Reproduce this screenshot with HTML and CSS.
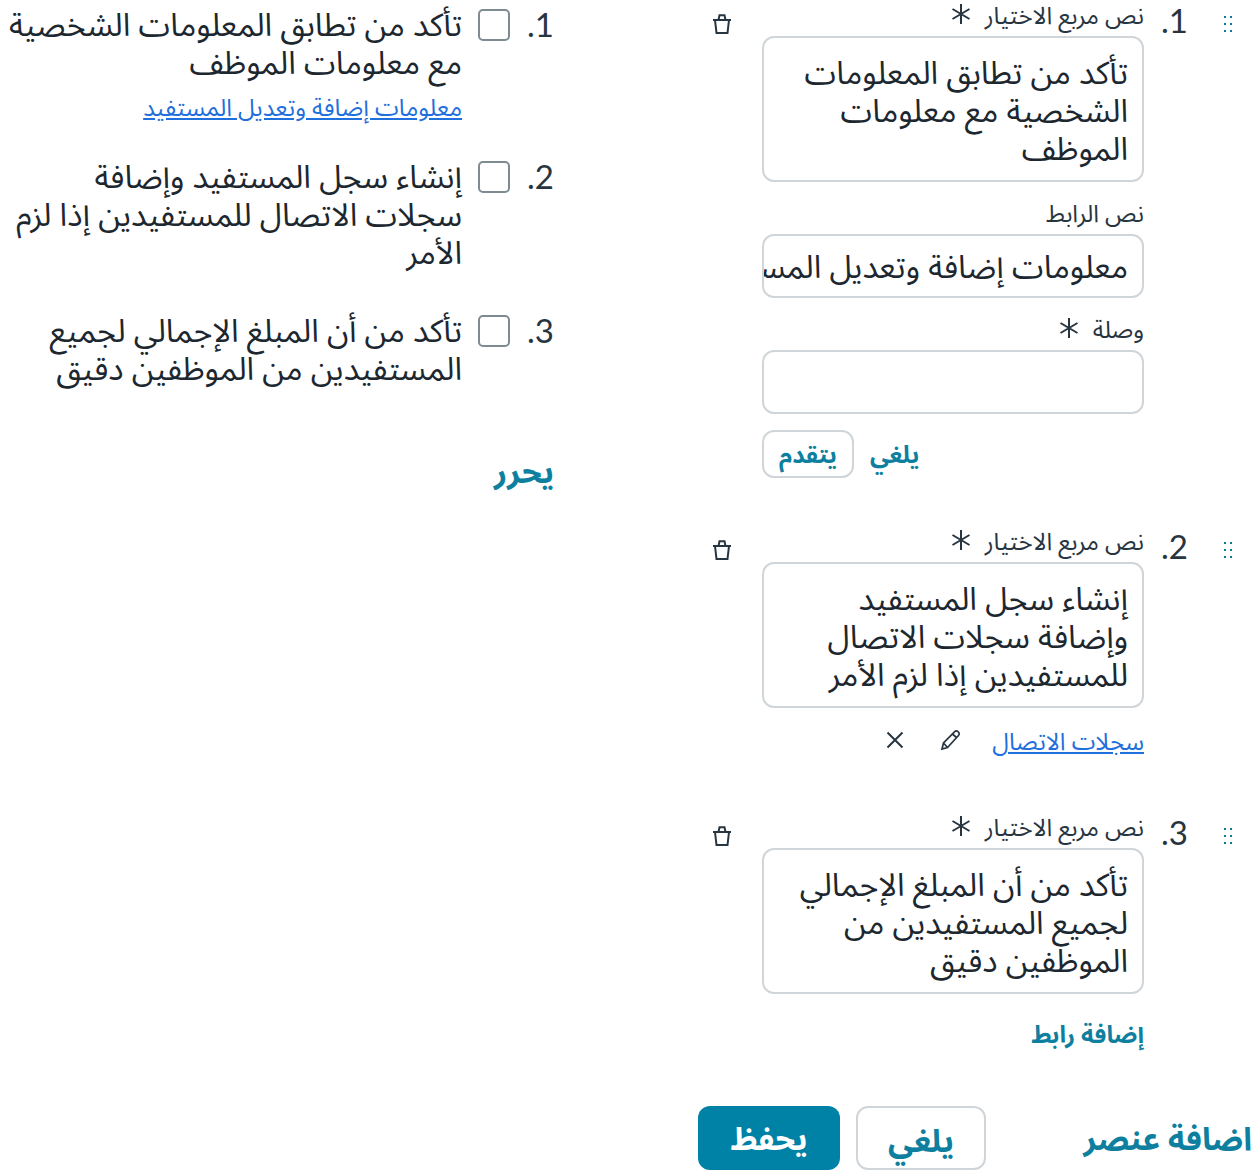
FILE: index.html
```html
<!DOCTYPE html>
<html lang="ar" dir="rtl">
<head>
    <meta charset="UTF-8">
    <meta name="viewport" content="width=device-width, initial-scale=1.0">
    <title>قائمة التحقق</title>
    <link rel="stylesheet" href="styles.css">
</head>
<body>
    <div class="page">
        <!-- Editor column -->
        <div class="editor">
            <div class="edit-item">
                <svg class="handle" viewBox="0 0 10 18"><g fill="#0b7a99"><rect x="1" y="1" width="2" height="2"/><rect x="7" y="1" width="2" height="2"/><rect x="1" y="8" width="2" height="2"/><rect x="7" y="8" width="2" height="2"/><rect x="1" y="15" width="2" height="2"/><rect x="7" y="15" width="2" height="2"/></g></svg>
                <div class="number">1.</div>
                <div class="fields">
                    <label class="field-label">نص مربع الاختيار <svg class="star" viewBox="0 0 20 20"><path d="M10 0v20M1.500 5l17 10M18.500 5l-17 10"/></svg></label>
                    <textarea class="text-box" rows="3">تأكد من تطابق المعلومات الشخصية مع معلومات الموظف</textarea>
                    <label class="field-label link-label">نص الرابط</label>
                    <input class="line-box" value="معلومات إضافة وتعديل المستفيد">
                    <label class="field-label url-label">وصلة <svg class="star" viewBox="0 0 20 20"><path d="M10 0v20M1.500 5l17 10M18.500 5l-17 10"/></svg></label>
                    <input class="line-box">
                    <div class="link-actions">
                        <span class="small-cancel">يلغي</span>
                        <button class="small-button">يتقدم</button>
                    </div>
                </div>
                <svg class="trash" viewBox="0 0 20 20"><path d="M1 6h18M3 6l1.500 13h11L17 6M6.500 6l1-4.800h5l1 4.800"/></svg>
            </div>

            <div class="edit-item second">
                <svg class="handle" viewBox="0 0 10 18"><g fill="#0b7a99"><rect x="1" y="1" width="2" height="2"/><rect x="7" y="1" width="2" height="2"/><rect x="1" y="8" width="2" height="2"/><rect x="7" y="8" width="2" height="2"/><rect x="1" y="15" width="2" height="2"/><rect x="7" y="15" width="2" height="2"/></g></svg>
                <div class="number">2.</div>
                <div class="fields">
                    <label class="field-label">نص مربع الاختيار <svg class="star" viewBox="0 0 20 20"><path d="M10 0v20M1.500 5l17 10M18.500 5l-17 10"/></svg></label>
                    <textarea class="text-box" rows="3">إنشاء سجل المستفيد وإضافة سجلات الاتصال للمستفيدين إذا لزم الأمر</textarea>
                    <div class="link-row">
                        <a class="item-link" href="#">سجلات الاتصال</a>
                        <svg class="pencil" viewBox="0 0 22 22"><path d="M2 20l1.500-6L14.500 2.800c1-1 2.500-1 3.700 0s1.300 2.700.3 3.700L7.500 18.500zM3.500 14l4 4.500M12.500 5l4.500 4"/></svg>
                        <svg class="close" viewBox="0 0 18 18"><path d="M1.500 1.500l15 15M16.500 1.500l-15 15"/></svg>
                    </div>
                </div>
                <svg class="trash" viewBox="0 0 20 20"><path d="M1 6h18M3 6l1.500 13h11L17 6M6.500 6l1-4.800h5l1 4.800"/></svg>
            </div>

            <div class="edit-item third">
                <svg class="handle" viewBox="0 0 10 18"><g fill="#0b7a99"><rect x="1" y="1" width="2" height="2"/><rect x="7" y="1" width="2" height="2"/><rect x="1" y="8" width="2" height="2"/><rect x="7" y="8" width="2" height="2"/><rect x="1" y="15" width="2" height="2"/><rect x="7" y="15" width="2" height="2"/></g></svg>
                <div class="number">3.</div>
                <div class="fields">
                    <label class="field-label">نص مربع الاختيار <svg class="star" viewBox="0 0 20 20"><path d="M10 0v20M1.500 5l17 10M18.500 5l-17 10"/></svg></label>
                    <textarea class="text-box" rows="3">تأكد من أن المبلغ الإجمالي لجميع المستفيدين من الموظفين دقيق</textarea>
                    <div class="add-link">إضافة رابط</div>
                </div>
                <svg class="trash" viewBox="0 0 20 20"><path d="M1 6h18M3 6l1.500 13h11L17 6M6.500 6l1-4.800h5l1 4.800"/></svg>
            </div>

            <!-- Bottom bar -->
            <div class="bottom-bar">
                <span class="add-item">اضافة عنصر</span>
                <div class="bottom-buttons">
                    <button class="big-button cancel">يلغي</button>
                    <button class="big-button save">يحفظ</button>
                </div>
            </div>
        </div>

        <!-- Preview column -->
        <div class="preview">
            <div class="check-item">
                <div class="number">1.</div>
                <span class="checkbox"></span>
                <div class="check-text">
                    <div>تأكد من تطابق المعلومات الشخصية مع معلومات الموظف</div>
                    <a class="item-link" href="#">معلومات إضافة وتعديل المستفيد</a>
                </div>
            </div>
            <div class="check-item">
                <div class="number">2.</div>
                <span class="checkbox"></span>
                <div class="check-text">
                    <div>إنشاء سجل المستفيد وإضافة سجلات الاتصال للمستفيدين إذا لزم الأمر</div>
                </div>
            </div>
            <div class="check-item">
                <div class="number">3.</div>
                <span class="checkbox"></span>
                <div class="check-text">
                    <div>تأكد من أن المبلغ الإجمالي لجميع المستفيدين من الموظفين دقيق</div>
                </div>
            </div>
            <div class="edit-link">يحرر</div>
        </div>
    </div>
</body>
</html>
```

FILE: styles.css
```css
* {
    box-sizing: border-box;
}

body {
    margin: 0;
    background: #fff;
    color: #273540;
    font-family: Lato, "Noto Sans Arabic", "Noto Sans", "DejaVu Sans", sans-serif;
}

.page {
    display: grid;
    grid-template-columns: 554px 554px;
    column-gap: 144px;
    height: 1170px;
    overflow: hidden;
}

/* Editor */
.edit-item {
    display: flex;
    align-items: flex-start;
}

.edit-item.second {
    margin-top: 48px;
}

.edit-item.third {
    margin-top: 54px;
}

.handle {
    width: 10px;
    height: 18px;
    margin: 15px 19px 0 0;
    flex: none;
}

.number {
    width: 26px;
    font-size: 33px;
    line-height: 38px;
    text-align: right;
    flex: none;
}

.edit-item .number {
    margin-right: 35px;
    margin-top: 1px;
}

.fields {
    width: 382px;
    margin-right: 18px;
    flex: none;
}

.field-label {
    display: flex;
    align-items: center;
    gap: 14px;
    height: 36px;
    padding-bottom: 3px;
    font-size: 24px;
    color: #273540;
}

.star {
    width: 20px;
    height: 20px;
    margin-bottom: 5px;
    fill: none;
    stroke: #273540;
    stroke-width: 2;
}

.text-box {
    display: block;
    width: 100%;
    height: 146px;
    padding: 15px 14px;
    border: 2px solid #d0d5d9;
    border-radius: 12px;
    background: #fff;
    color: #1c2730;
    font: 32px/38px Lato, "Noto Sans Arabic", "Noto Sans", "DejaVu Sans", sans-serif;
    resize: none;
    overflow: hidden;
}

.line-box {
    display: block;
    width: 100%;
    height: 64px;
    padding: 4px 14px 0 0;
    border: 2px solid #d0d5d9;
    border-radius: 12px;
    background: #fff;
    color: #1c2730;
    font: 32px/38px Lato, "Noto Sans Arabic", "Noto Sans", "DejaVu Sans", sans-serif;
}

.link-label {
    margin-top: 16px;
}

.url-label {
    margin-top: 16px;
}

.link-actions {
    display: flex;
    align-items: center;
    justify-content: flex-end;
    gap: 16px;
    margin-top: 16px;
}

.small-button {
    height: 48px;
    width: 92px;
    padding: 0;
    border: 2px solid #d0d5d9;
    border-radius: 12px;
    background: #fff;
    color: #0e7f9e;
    font: bold 24px/34px Lato, "Noto Sans Arabic", "Noto Sans", "DejaVu Sans", sans-serif;
}

.small-cancel {
    color: #0e7f9e;
    font-size: 24px;
    font-weight: bold;
    line-height: 34px;
}

.link-row {
    display: flex;
    align-items: center;
    margin-top: 16px;
    height: 34px;
}

.item-link {
    color: #1f6fdc;
    font-size: 24px;
    line-height: 34px;
}

.pencil {
    width: 22px;
    height: 22px;
    margin: 0 30px 2px 0;
    fill: none;
    stroke: #273540;
    stroke-width: 1.7;
}

.close {
    width: 18px;
    height: 18px;
    margin: 0 36px 2px 0;
    fill: none;
    stroke: #273540;
    stroke-width: 2;
}

.add-link {
    margin-top: 23px;
    color: #0e7f9e;
    font-size: 24px;
    font-weight: bold;
    line-height: 34px;
}

.trash {
    width: 20px;
    height: 20px;
    margin: 14px 30px 0 0;
    fill: none;
    stroke: #273540;
    stroke-width: 2;
    flex: none;
}

.bottom-bar {
    display: flex;
    align-items: center;
    justify-content: space-between;
    margin-top: 55px;
    height: 64px;
}

.add-item {
    padding-top: 4px;
    color: #0e7f9e;
    font-size: 32px;
    font-weight: bold;
}

.bottom-buttons {
    display: flex;
    gap: 16px;
}

.big-button {
    height: 64px;
    border-radius: 12px;
    font: bold 32px Lato, "Noto Sans Arabic", "Noto Sans", "DejaVu Sans", sans-serif;
    padding: 0;
}

.big-button.cancel {
    width: 130px;
    border: 2px solid #d0d5d9;
    background: #fff;
    color: #0e7f9e;
}

.big-button.save {
    width: 142px;
    border: none;
    background: #0081a6;
    color: #fff;
}

/* Preview */
.check-item {
    display: flex;
    align-items: flex-start;
    margin-bottom: 35px;
}

.check-item .number {
    margin-top: 5px;
}

.checkbox {
    width: 32px;
    height: 32px;
    margin: 9px 18px 0 0;
    border: 2px solid #7f8b92;
    border-radius: 5px;
    flex: none;
}

.check-text {
    margin: 5px 16px 0 0;
    font-size: 32px;
    line-height: 38px;
    color: #1c2730;
}

.check-text .item-link {
    display: block;
    margin-top: 15px;
    font-size: 24px;
    line-height: 21px;
}

.edit-link {
    margin-top: 52px;
    color: #0e7f9e;
    font-size: 32px;
    font-weight: bold;
}
```
